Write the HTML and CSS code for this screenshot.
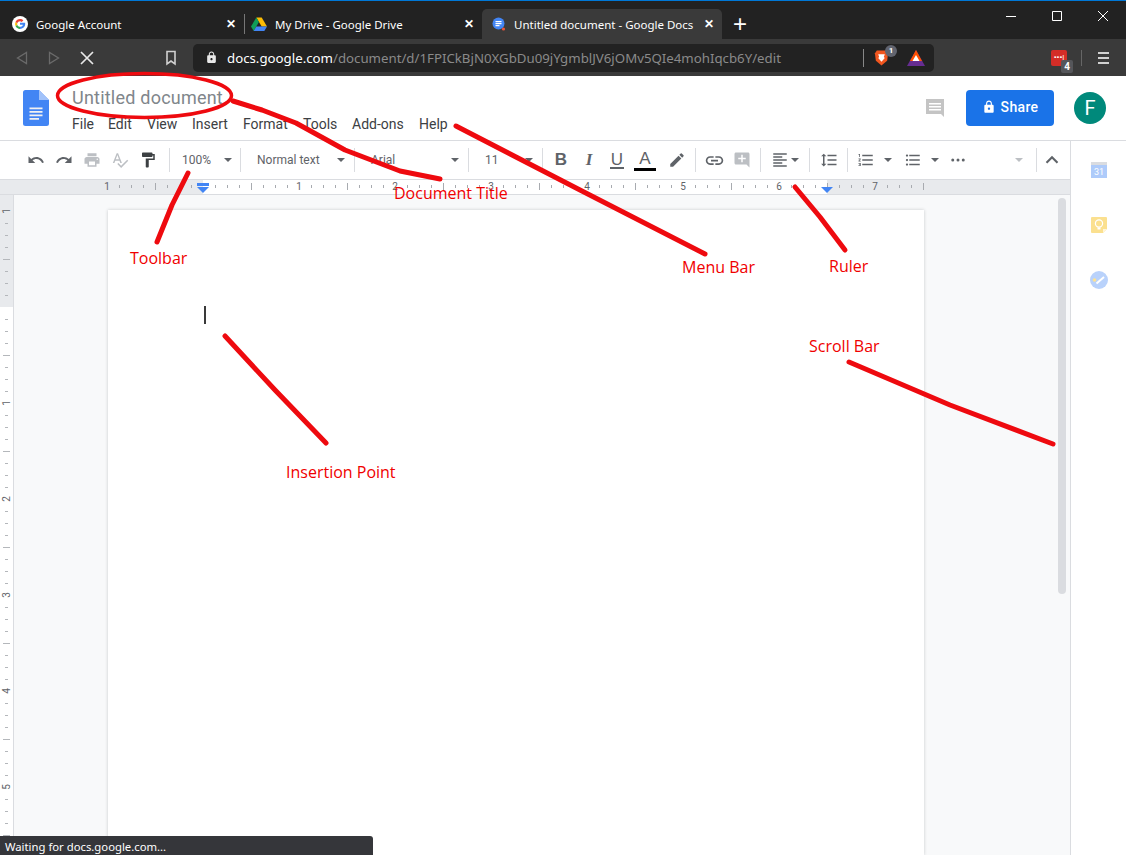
FILE: index.html

```html
<!DOCTYPE html>
<html lang="en">
<head>
    <meta charset="UTF-8">
    <title>Untitled document - Google Docs</title>
    <link rel="stylesheet" href="styles.css">
</head>
<body>

<div class="tabstrip">
    <div class="tab tab-first">
        <svg class="favicon" viewBox="0 0 16 16">
            <circle cx="8" cy="8" r="8" fill="#fff"/>
            <path d="M13.1 6.7H8v2h2.9c-.3 1.3-1.4 2.1-2.9 2.1V13c2.8 0 5.2-2 5.2-4.9 0-.5 0-1-.1-1.4z" fill="#4285f4"/>
            <path d="M8 13c-2 0-3.7-1.2-4.5-2.9l1.8-1.400C5.7 10 6.700 10.800 8 10.800z" fill="#34a853"/>
            <path d="M3.5 10.100a5.200 5.200 0 0 1 0-4.200l1.800 1.400a3 3 0 0 0 0 1.400z" fill="#fbbc05"/>
            <path d="M3.5 5.900C4.300 4.200 6 3 8 3c1.300 0 2.500.5 3.400 1.300L9.800 5.900C9.300 5.500 8.700 5.200 8 5.200c-1.300 0-2.300.8-2.700 2.100z" fill="#ea4335"/>
        </svg>
        <span class="tab-title">Google Account</span>
        <span class="tab-close">✕</span>
    </div>
    <div class="tab-divider"></div>
    <div class="tab">
        <svg class="favicon" viewBox="0 0 16 16">
            <path d="M5.3 1.500h5.400L16 10.500h-5.300z" fill="#fbbc04"/>
            <path d="M5.3 1.500L0 10.500l2.700 4.500 5.200-9z" fill="#0f9d58"/>
            <path d="M2.700 15h10.600l2.700-4.500H5.300z" fill="#4285f4"/>
        </svg>
        <span class="tab-title">My Drive - Google Drive</span>
        <span class="tab-close">✕</span>
    </div>
    <div class="tab tab-active">
        <svg class="favicon favicon-docs" viewBox="0 0 16 16">
            <circle cx="7.5" cy="7.5" r="6" fill="#4285f4"/>
            <path d="M4.500 5h6v1.200h-6zM4.500 7h6v1.200h-6zM4.500 9h4v1.200h-4z" fill="#fff"/>
            <circle cx="12.5" cy="13" r="1.6" fill="#e8553a"/>
        </svg>
        <span class="tab-title">Untitled document - Google Docs</span>
        <span class="tab-close">✕</span>
    </div>
    <div class="new-tab">+</div>
    <div class="window-controls">
        <svg viewBox="0 0 46 30"><path d="M18 15.5h10" stroke="#fff" fill="none"/></svg>
        <svg viewBox="0 0 46 30"><path d="M18.500 10.500h9v9h-9z" stroke="#fff" fill="none"/></svg>
        <svg viewBox="0 0 46 30"><path d="M18 10l10 10M28 10L18 20" stroke="#fff" fill="none"/></svg>
    </div>
</div>

<div class="navbar">
    <svg class="nav-icon nav-back" viewBox="0 0 12 14"><path d="M10.500 1.500v11L1.500 7z" fill="none" stroke="#6a6a6a" stroke-width="1.3"/></svg>
    <svg class="nav-icon nav-forward" viewBox="0 0 12 14"><path d="M1.500 1.500v11l9-5.500z" fill="none" stroke="#6a6a6a" stroke-width="1.3"/></svg>
    <svg class="nav-stop" viewBox="0 0 14 14"><path d="M1 1l12 12M13 1L1 13" stroke="#e8e8e8" stroke-width="1.7" fill="none"/></svg>
    <svg class="nav-bookmark" viewBox="0 0 12 16"><path d="M2 1.500h8v12.500l-4-3-4 3z" stroke="#d0d0d0" stroke-width="1.6" fill="none"/></svg>
    <div class="addressbar">
        <svg class="addr-lock" viewBox="0 0 24 24"><path fill="#e8e8e8" d="M18 8h-1V6c0-2.760-2.240-5-5-5S7 3.240 7 6v2H6c-1.100 0-2 .9-2 2v10c0 1.100.9 2 2 2h12c1.100 0 2-.9 2-2V10c0-1.100-.9-2-2-2zm-6 9c-1.100 0-2-.9-2-2s.9-2 2-2 2 .9 2 2-.9 2-2 2zm3.100-9H8.900V6c0-1.710 1.390-3.100 3.100-3.100 1.710 0 3.100 1.390 3.100 3.100v2z"/></svg>
        <span class="url"><span class="url-host">docs.google.com</span>/document/d/1FPICkBjN0XGbDu09jYgmblJV6jOMv5QIe4mohIqcb6Y/edit</span>
        <div class="addr-divider"></div>
        <div class="brave">
            <svg viewBox="0 0 16 18"><path d="M3 1h10l2 3-1 8-6 5-6-5-1-8z" fill="#f1561f"/><path d="M4.500 5h7l-1 3 1 1-3.500 4-3.500-4 1-1z" fill="#fff"/></svg>
            <span class="brave-count">1</span>
        </div>
        <svg class="bat" viewBox="0 0 18 16"><path d="M9 0l9 16H0z" fill="#662d91"/><path d="M9 0l6 11H3z" fill="#ff5000"/><path d="M9 5l3.500 6h-7z" fill="#fff"/></svg>
    </div>
    <div class="ext-lastpass">
        <span class="lp-dots">•••<i>|</i></span>
        <span class="lp-count">4</span>
    </div>
    <div class="nav-divider"></div>
    <div class="nav-menu"><span></span><span></span><span></span></div>
</div>

<header class="docs-header">
    <svg class="docs-logo" viewBox="0 0 26 36">
        <path d="M16 0H2.500A2.500 2.500 0 0 0 0 2.500v31A2.500 2.500 0 0 0 2.500 36h21a2.500 2.500 0 0 0 2.500-2.500V10z" fill="#4285f4"/>
        <path d="M16 0l10 10H16z" fill="#a1c2fa"/>
        <path d="M6.500 17.500h13v1.700h-13zM6.500 21h13v1.700h-13zM6.500 24.500h13v1.700h-13zM6.500 28h9.500v1.700H6.500z" fill="#f1f1f1"/>
    </svg>
    <div class="docs-titles">
        <div class="doc-title">Untitled document</div>
        <nav class="menubar">
            <span class="m-file">File</span>
            <span class="m-edit">Edit</span>
            <span class="m-view">View</span>
            <span class="m-insert">Insert</span>
            <span class="m-format">Format</span>
            <span class="m-tools">Tools</span>
            <span class="m-addons">Add-ons</span>
            <span>Help</span>
        </nav>
    </div>
    <svg class="comment-icon" viewBox="0 0 20 20"><path fill="#c4c4c4" d="M1 1h18v18l-3-3H1z"/><path fill="#fff" d="M4 5h12v1.500H4zM4 8h12v1.500H4zM4 11h12v1.500H4z"/></svg>
    <button class="share-btn">
        <svg viewBox="0 0 24 24"><path fill="#fff" d="M18 8h-1V6c0-2.760-2.240-5-5-5S7 3.240 7 6v2H6c-1.100 0-2 .9-2 2v10c0 1.100.9 2 2 2h12c1.100 0 2-.9 2-2V10c0-1.100-.9-2-2-2zm-6 9c-1.100 0-2-.9-2-2s.9-2 2-2 2 .9 2 2-.9 2-2 2zm3.100-9H8.900V6c0-1.710 1.390-3.100 3.100-3.100 1.710 0 3.100 1.390 3.100 3.100v2z"/></svg>
        <span>Share</span>
    </button>
    <div class="avatar">F</div>
</header>

<div class="workspace">
    <div class="doc-column">
        <div class="toolbar">
            <div class="tb-btn"><svg viewBox="0 0 24 24"><path d="M12.500 8c-2.650 0-5.050.99-6.900 2.600L2 7v9h9l-3.620-3.620c1.390-1.160 3.160-1.880 5.120-1.880 3.540 0 6.550 2.310 7.600 5.500l2.370-.78C21.080 11.030 17.150 8 12.500 8z"/></svg></div>
            <div class="tb-btn"><svg viewBox="0 0 24 24"><path d="M18.400 10.600C16.550 8.990 14.150 8 11.500 8c-4.650 0-8.580 3.030-9.960 7.220L3.900 16c1.050-3.190 4.050-5.500 7.600-5.500 1.950 0 3.730.72 5.120 1.880L13 16h9V7l-3.600 3.600z"/></svg></div>
            <div class="tb-btn tb-off"><svg viewBox="0 0 24 24"><path d="M19 8H5c-1.660 0-3 1.340-3 3v6h4v4h12v-4h4v-6c0-1.660-1.340-3-3-3zm-3 11H8v-5h8v5zm3-7c-.55 0-1-.45-1-1s.45-1 1-1 1 .45 1 1-.45 1-1 1zm-1-9H6v4h12V3z"/></svg></div>
            <div class="tb-btn tb-off"><svg viewBox="0 0 24 24"><path d="M12.450 16h2.090L9.430 3H7.570L2.460 16h2.090l1.120-3h5.640l1.140 3zm-6.020-5L8.500 5.480 10.570 11H6.430zm15.160.59l-8.090 8.090L9.830 16l-1.410 1.410 5.090 5.090L23 13l-1.410-1.410z"/></svg></div>
            <div class="tb-btn"><svg class="tb-paint" viewBox="0 0 24 24"><path d="M18 4V3c0-.55-.45-1-1-1H5c-.55 0-1 .45-1 1v4c0 .55.45 1 1 1h12c.55 0 1-.45 1-1V6h1v4H9v11c0 .55.45 1 1 1h2c.55 0 1-.45 1-1v-9h8V4h-3z"/></svg></div>
            <div class="tb-sep tb-sep-first"></div>

            <div class="tb-select tb-zoom"><span>100%</span><i class="caret"></i></div>
            <div class="tb-sep tb-sep-flush"></div>
            <div class="tb-select tb-wide"><span>Normal text</span><i class="caret"></i></div>
            <div class="tb-sep tb-sep-flush"></div>
            <div class="tb-select tb-wide"><span>Arial</span><i class="caret"></i></div>
            <div class="tb-sep tb-sep-flush"></div>
            <div class="tb-select tb-size"><span>11</span><i class="caret"></i></div>
            <div class="tb-sep tb-sep-flush"></div>

            <div class="tb-btn tb-text tb-lead"><b>B</b></div>
            <div class="tb-btn tb-text"><b class="tb-italic">I</b></div>
            <div class="tb-btn tb-text"><span class="tb-under">U</span></div>
            <div class="tb-btn tb-text tb-color"><span>A</span><i></i></div>
            <div class="tb-btn tb-lead"><svg viewBox="0 0 24 24"><path d="M3 17.250V21h3.750L17.810 9.940l-3.750-3.750L3 17.250zM20.710 7.040c.39-.39.39-1.020 0-1.410l-2.340-2.340a.996.996 0 0 0-1.410 0l-1.830 1.830 3.750 3.750 1.830-1.830z"/></svg></div>
            <div class="tb-sep"></div>
            <div class="tb-btn"><svg class="tb-big" viewBox="0 0 24 24"><path d="M3.900 12c0-1.710 1.390-3.100 3.100-3.100h4V7H7c-2.760 0-5 2.240-5 5s2.240 5 5 5h4v-1.900H7c-1.710 0-3.100-1.390-3.100-3.100zM8 13h8v-2H8v2zm9-6h-4v1.900h4c1.710 0 3.100 1.390 3.100 3.100s-1.390 3.100-3.100 3.100h-4V17h4c2.760 0 5-2.240 5-5s-2.240-5-5-5z"/></svg></div>
            <div class="tb-btn tb-off"><svg viewBox="0 0 24 24"><path d="M21.990 4c0-1.100-.89-2-1.990-2H4c-1.100 0-2 .9-2 2v12c0 1.100.9 2 2 2h14l4 4-.01-18zM17 11h-4v4h-2v-4H7V9h4V5h2v4h4v2z"/></svg></div>
            <div class="tb-sep"></div>
            <div class="tb-btn tb-align"><svg viewBox="0 0 24 24"><path d="M15 15H3v2h12v-2zm0-8H3v2h12V7zM3 13h18v-2H3v2zm0 8h18v-2H3v2zM3 3v2h18V3H3z"/></svg><i class="caret"></i></div>
            <div class="tb-sep"></div>
            <div class="tb-btn tb-spacing"><svg viewBox="0 0 24 24"><path d="M6 7h2.500L5 3.500 1.500 7H4v10H1.500L5 20.500 8.500 17H6V7zm4-2v2h12V5H10zm0 14h12v-2H10v2zm0-6h12v-2H10v2z"/></svg></div>
            <div class="tb-sep"></div>
            <div class="tb-btn tb-list"><svg viewBox="0 0 24 24"><path d="M2 17h2v.5H3v1h1v.5H2v1h3v-4H2v1zm1-9h1V4H2v1h1v3zm-1 3h1.800L2 13.100v.9h3v-1H3.200L5 10.900V10H2v1zm5-6v2h14V5H7zm0 14h14v-2H7v2zm0-6h14v-2H7v2z"/></svg><i class="caret"></i></div>
            <div class="tb-btn tb-list tb-list-b"><svg viewBox="0 0 24 24"><path d="M4 10.500c-.83 0-1.500.67-1.500 1.500s.67 1.500 1.500 1.500 1.500-.67 1.500-1.500-.67-1.500-1.500-1.500zm0-6c-.83 0-1.500.67-1.500 1.500S3.170 7.500 4 7.500 5.500 6.830 5.500 6 4.830 4.500 4 4.500zm0 12c-.83 0-1.500.68-1.500 1.500s.68 1.500 1.500 1.500 1.500-.68 1.500-1.500-.67-1.500-1.500-1.500zM7 19h14v-2H7v2zm0-6h14v-2H7v2zm0-8v2h14V5H7z"/></svg><i class="caret"></i></div>
            <div class="tb-btn"><svg viewBox="0 0 24 24"><circle cx="5" cy="12" r="2"/><circle cx="12" cy="12" r="2"/><circle cx="19" cy="12" r="2"/></svg></div>
            <div class="tb-spacer"></div>
            <i class="caret caret-off"></i>
            <div class="tb-sep tb-sep-end"></div>
            <div class="tb-btn tb-chevron"><svg viewBox="0 0 24 24"><path d="M12 7l-7.500 7.500 1.800 1.800L12 10.600l5.700 5.700 1.800-1.800z"/></svg></div>
        </div>

        <svg class="ruler-h" width="1070" height="14" viewBox="0 0 1070 14">
            <defs>
                <pattern id="hticks" width="96" height="14" patternUnits="userSpaceOnUse" x="11">
                    <path d="M12.500 5v3M24.500 5v3M36.500 5v3M60.500 5v3M72.500 5v3M84.500 5v3" stroke="#a8abb0"/>
                    <path d="M48.500 3v7" stroke="#a8abb0"/>
                </pattern>
            </defs>
            <rect width="1070" height="14" fill="#e8eaed"/>
            <rect x="203" width="624" height="14" fill="#fff"/>
            <rect x="108" width="816" height="14" fill="url(#hticks)"/>
            <path d="M923.500 3v7" stroke="#a8abb0"/>
            <g class="ruler-num">
                <text x="107" y="10">1</text>
                <text x="299" y="10">1</text>
                <text x="395" y="10">2</text>
                <text x="491" y="10">3</text>
                <text x="587" y="10">4</text>
                <text x="683" y="10">5</text>
                <text x="779" y="10">6</text>
                <text x="875" y="10">7</text>
            </g>
            <path d="M197 3h12v3h-12z" fill="#4285f4"/>
            <path d="M197 7h12l-6 6z" fill="#4285f4"/>
            <path d="M821 7h12l-6 6z" fill="#4285f4"/>
        </svg>

        <div class="canvas">
            <svg class="ruler-v" width="14" height="661" viewBox="0 0 14 661">
                <defs>
                    <pattern id="vticks" width="14" height="96" patternUnits="userSpaceOnUse" y="16">
                        <path d="M5 12.500h3M5 24.500h3M5 36.500h3M5 60.500h3M5 72.500h3M5 84.500h3" stroke="#b4b7bb"/>
                        <path d="M3 48.500h7" stroke="#b4b7bb"/>
                    </pattern>
                </defs>
                <rect width="14" height="661" fill="#fff"/>
                <rect width="13" height="112" fill="#e8eaed"/>
                <rect y="16" width="13" height="645" fill="url(#vticks)"/>
                <rect x="13" width="1" height="661" fill="#dadce0"/>
                <g class="ruler-num">
                    <text transform="translate(10 16) rotate(-90)">1</text>
                    <text transform="translate(10 208) rotate(-90)">1</text>
                    <text transform="translate(10 304) rotate(-90)">2</text>
                    <text transform="translate(10 400) rotate(-90)">3</text>
                    <text transform="translate(10 496) rotate(-90)">4</text>
                    <text transform="translate(10 592) rotate(-90)">5</text>
                </g>
            </svg>
            <div class="page"><div class="caret-line"></div></div>
            <div class="scrollbar"></div>
        </div>
    </div>

    <aside class="sidepanel">
        <svg viewBox="0 0 18 18"><path d="M1 1h16v16H1z" fill="#aecbfa"/><path d="M1 1h16v3H1z" fill="#dadce0"/><text x="9" y="14" class="cal-day">31</text></svg>
        <svg viewBox="0 0 18 18"><path d="M2 1h14a1 1 0 0 1 1 1v11l-4 4H2a1 1 0 0 1-1-1V2a1 1 0 0 1 1-1z" fill="#fbe08f"/><path d="M13 17v-4h4z" fill="#fff6d8"/><circle cx="9" cy="7.5" r="3.6" fill="none" stroke="#fff" stroke-width="1.2"/><path d="M7.500 11.500h3v2h-3z" fill="#fff"/></svg>
        <svg viewBox="0 0 18 18"><circle cx="9" cy="9" r="9" fill="#b9d2fb"/><path d="M6.500 12.500L14 6" stroke="#fff" stroke-width="2" fill="none"/><circle cx="4.500" cy="9" r="1.800" fill="#fde293"/></svg>
    </aside>
</div>

<div class="status-bubble">Waiting for docs.google.com...</div>

<!-- red marks that were drawn over the screenshot -->
<svg class="marks" width="1126" height="855" viewBox="0 0 1126 855">
    <ellipse class="mark-ring" cx="144.5" cy="95.5" rx="87" ry="22"/>
    <path d="M233 101L262 110L296 123L345 150L400 171L440 179"/>
    <path d="M456 126L580 190L705 254"/>
    <path d="M795 187L820 217L845 250"/>
    <path d="M188 173L172 205L157 242"/>
    <path d="M225 336L275 390L326 443"/>
    <path d="M849 362L950 405L1053 444"/>
</svg>
<span class="mark-label l-title">Document Title</span>
<span class="mark-label l-toolbar">Toolbar</span>
<span class="mark-label l-menu">Menu Bar</span>
<span class="mark-label l-ruler">Ruler</span>
<span class="mark-label l-scroll">Scroll Bar</span>
<span class="mark-label l-insert">Insertion Point</span>

</body>
</html>
```

FILE: styles.css

```css
* {
    box-sizing: border-box;
}
html, body {
    margin: 0;
    height: 855px;
    overflow: hidden;
}
body {
    position: relative;
    display: flex;
    flex-direction: column;
    background-color: #fff;
    font-family: Roboto, "Liberation Sans", sans-serif;
}
svg {
    display: block;
}
i {
    font-style: normal;
}

/* browser window */
.tabstrip {
    display: flex;
    align-items: flex-end;
    height: 39px;
    padding-top: 8px;
    border-top: 1px solid #0078d7;
    background-color: #222222;
    color: #fff;
    font-family: "Noto Sans", sans-serif;
    font-size: 11.5px;
    position: relative;
}
.tab {
    display: flex;
    align-items: center;
    width: 237px;
    height: 30px;
    padding-left: 6px;
    padding-right: 6px;
}
.tab-first {
    width: 244px;
    padding-left: 12px;
    padding-right: 6px;
}
.tab-active {
    width: 240px;
    padding-left: 9px;
    background-color: #3a3a3a;
    border-radius: 5px 5px 0 0;
}
.tab-divider {
    width: 1px;
    height: 20px;
    margin-bottom: 5px;
    background-color: #777;
}
.favicon {
    flex: none;
    width: 16px;
    height: 16px;
    margin-right: 8px;
}
.favicon-docs {
    margin-right: 7px;
}
.tab-title {
    flex: 1;
    white-space: nowrap;
    overflow: hidden;
}
.tab-close {
    flex: none;
    margin-right: 1px;
    font-size: 12px;
    font-weight: bold;
    line-height: 1;
    width: 12px;
    text-align: center;
}
.new-tab {
    width: 36px;
    height: 30px;
    text-align: center;
    font-size: 24px;
    line-height: 30px;
    font-family: "Liberation Sans", sans-serif;
}
.window-controls {
    display: flex;
    position: absolute;
    right: 0;
    top: 0;
}
.window-controls svg {
    width: 46px;
    height: 30px;
}

.navbar {
    display: flex;
    align-items: center;
    height: 37px;
    padding-bottom: 0;
    background-color: #3a3a3a;
}
.nav-icon {
    width: 12px;
    height: 14px;
}
.nav-back {
    margin-left: 16px;
}
.nav-forward {
    margin-left: 20px;
}
.nav-stop {
    width: 14px;
    height: 14px;
    margin-left: 20px;
}
.nav-bookmark {
    width: 12px;
    height: 16px;
    margin-left: 71px;
}
.addressbar {
    display: flex;
    align-items: center;
    width: 741px;
    height: 28px;
    margin-left: 16px;
    padding-left: 12px;
    background-color: #222222;
    border-radius: 5px;
}
.addr-lock {
    width: 13px;
    height: 13px;
}
.url {
    margin-left: 9px;
    width: 636px;
    font-family: "Noto Sans", sans-serif;
    font-size: 13.25px;
    color: #8a8a8a;
    white-space: nowrap;
}
.url-host {
    color: #fff;
}
.addr-divider {
    width: 1px;
    height: 18px;
    background-color: #888;
}
.brave {
    position: relative;
    margin-left: 10px;
}
.brave svg {
    width: 15px;
    height: 18px;
}
.brave-count {
    position: absolute;
    left: 11px;
    top: -4px;
    width: 12px;
    height: 12px;
    border-radius: 50%;
    background-color: #61646f;
    color: #fff;
    font-size: 8px;
    line-height: 12px;
    text-align: center;
    font-weight: bold;
}
.bat {
    width: 18px;
    height: 16px;
    margin-left: 18px;
}
.ext-lastpass {
    position: relative;
    width: 16px;
    height: 16px;
    margin-left: 117px;
    background-color: #d32d27;
    border-radius: 2px;
}
.lp-dots {
    display: block;
    color: #fff;
    font-size: 8px;
    line-height: 16px;
    text-align: center;
    font-weight: bold;
    white-space: nowrap;
}
.lp-count {
    position: absolute;
    left: 10px;
    top: 10px;
    width: 12px;
    height: 13px;
    border-radius: 2px;
    background-color: #55565a;
    color: #fff;
    font-size: 10px;
    line-height: 13px;
    text-align: center;
    font-weight: bold;
}
.nav-divider {
    width: 1px;
    height: 16px;
    margin-left: 14px;
    background-color: #666;
}
.nav-menu {
    display: flex;
    flex-direction: column;
    gap: 3px;
    margin-left: 16px;
}
.nav-menu span {
    display: block;
    width: 11px;
    height: 2px;
    background-color: #d0d0d0;
}

/* docs header */
.docs-header {
    display: flex;
    align-items: flex-start;
    height: 65px;
    padding-top: 14px;
    border-bottom: 1px solid #dadce0;
    background-color: #fff;
}
.docs-logo {
    width: 26px;
    height: 36px;
    margin-left: 23px;
}
.docs-titles {
    margin-left: 23px;
    flex: 1;
}
.doc-title {
    font-size: 18px;
    line-height: 20px;
    margin-top: -2px;
    color: #80868b;
    letter-spacing: 0.22px;
}
.menubar {
    display: flex;
    margin-top: 6px;
    font-size: 14px;
    line-height: 20px;
    color: #3c4043;
}
.menubar span {
    flex: none;
}
.m-file { width: 36px; }
.m-edit { width: 39px; }
.m-view { width: 45px; }
.m-insert { width: 51px; }
.m-format { width: 60px; }
.m-tools { width: 49px; }
.m-addons { width: 67px; }
.comment-icon {
    width: 20px;
    height: 20px;
    margin-top: 8px;
    margin-right: 21px;
}
.share-btn {
    display: flex;
    align-items: center;
    justify-content: center;
    gap: 5px;
    width: 88px;
    height: 36px;
    padding: 0 0 2px;
    border: none;
    border-radius: 4px;
    background-color: #1a73e8;
    color: #fff;
    font-family: Roboto, sans-serif;
    font-size: 14px;
    font-weight: 500;
    letter-spacing: 0.35px;
}
.share-btn svg {
    width: 14px;
    height: 14px;
}
.avatar {
    width: 32px;
    height: 32px;
    margin-left: 20px;
    margin-right: 20px;
    margin-top: 2px;
    border-radius: 50%;
    background-color: #00897b;
    color: #fff;
    font-size: 20px;
    line-height: 32px;
    text-align: center;
}

/* work area */
.workspace {
    display: flex;
    flex: 1;
    min-height: 0;
}
.doc-column {
    display: flex;
    flex-direction: column;
    width: 1070px;
}
.toolbar {
    display: flex;
    align-items: center;
    height: 39px;
    padding-left: 22px;
    padding-right: 4px;
    border-bottom: 1px solid #dadce0;
    color: #5f6368;
}
.tb-btn {
    display: flex;
    align-items: center;
    justify-content: center;
    flex: none;
    width: 28px;
    height: 28px;
}
.tb-btn svg {
    flex: none;
    width: 18px;
    height: 18px;
    fill: #5f6368;
}
.tb-btn .tb-paint {
    fill: #3c4043;
}
.tb-btn .tb-big {
    width: 21px;
    height: 21px;
}
.tb-off svg {
    fill: #bcbfc3;
}
.tb-sep {
    flex: none;
    width: 1px;
    height: 24px;
    margin: 0 4px;
    background-color: #dadce0;
}
.tb-sep-first {
    margin: 0 0 0 7px;
}
.tb-sep-flush {
    margin: 0;
}
.tb-sep-end {
    margin: 0 1px 0 13px;
}
.tb-lead {
    margin-left: 4px;
}
.tb-spacing {
    margin-left: 1px;
}
.tb-select {
    display: flex;
    align-items: center;
    justify-content: space-between;
    flex: none;
    height: 28px;
    padding-right: 9px;
    padding-left: 16px;
    font-size: 12px;
}
.tb-zoom {
    width: 70px;
    padding-left: 12px;
    padding-right: 8px;
}
.tb-wide {
    width: 113px;
}
.tb-size {
    width: 73px;
}
.caret {
    display: block;
    flex: none;
    width: 0;
    height: 0;
    border-left: 4px solid transparent;
    border-right: 4px solid transparent;
    border-top: 4px solid #5f6368;
}
.caret-off {
    border-top-color: #bcbfc3;
}
.tb-text {
    font-size: 17px;
    font-family: "Liberation Sans", sans-serif;
}
.tb-italic {
    font-family: "Liberation Serif", serif;
    font-style: italic;
}
.tb-under {
    border-bottom: 2px solid #5f6368;
    line-height: 15px;
    padding: 0 1px;
}
.tb-color {
    flex-direction: column;
}
.tb-color span {
    line-height: 17px;
    margin-top: 1px;
}
.tb-color i {
    display: block;
    width: 22px;
    height: 3px;
    background-color: #000;
    margin-top: 1px;
}
.tb-align {
    width: 40px;
    gap: 2px;
    justify-content: flex-start;
    padding-left: 6px;
}
.tb-list {
    width: 44px;
    justify-content: flex-start;
    padding-left: 5px;
    gap: 9px;
}
.tb-list-b {
    margin-left: 3px;
    margin-right: 1px;
}
.tb-spacer {
    flex: 1;
}
.tb-chevron svg {
    width: 20px;
    height: 20px;
}

.ruler-h {
    flex: none;
}
.ruler-num {
    font-family: Roboto, sans-serif;
    font-size: 10px;
    fill: #5f6368;
    text-anchor: middle;
}
.canvas {
    display: flex;
    flex: 1;
    min-height: 0;
    background-color: #f8f9fa;
    border-top: 1px solid #dadce0;
}
.ruler-v {
    flex: none;
}
.page {
    flex: none;
    width: 816px;
    margin-left: 94px;
    margin-top: 15px;
    padding: 96px;
    background-color: #fff;
    box-shadow: 0 0 3px rgba(60, 64, 67, 0.25);
}
.caret-line {
    width: 2px;
    height: 18px;
    background-color: #3a3a3a;
}
.scrollbar {
    flex: none;
    width: 8px;
    height: 396px;
    margin-top: 3px;
    margin-left: 134px;
    border-radius: 4px;
    background-color: #dadce0;
}
.sidepanel {
    display: flex;
    flex-direction: column;
    align-items: center;
    gap: 37px;
    width: 56px;
    padding-top: 20px;
    border-left: 1px solid #dadce0;
}
.sidepanel svg {
    width: 18px;
    height: 18px;
}
.cal-day {
    font-family: Roboto, sans-serif;
    font-size: 9px;
    fill: #fff;
    text-anchor: middle;
}

.status-bubble {
    position: absolute;
    left: 0;
    bottom: 0;
    width: 373px;
    height: 19px;
    padding-left: 5px;
    border-radius: 0 3px 0 0;
    background-color: #35363a;
    color: #fff;
    font-family: "Noto Sans", sans-serif;
    font-size: 11.3px;
    line-height: 21px;
}

/* red annotations on top of the screenshot */
.marks {
    position: absolute;
    left: 0;
    top: 0;
    fill: none;
    stroke: #ee0a0f;
    stroke-width: 5;
    stroke-linecap: round;
    stroke-linejoin: round;
}
.marks .mark-ring {
    stroke-width: 3.5;
}
.mark-label {
    position: absolute;
    color: #f00000;
    font-family: "Open Sans", sans-serif;
    font-size: 16px;
    line-height: 20px;
    white-space: nowrap;
}
.l-title { left: 394px; top: 183px; }
.l-toolbar { left: 130px; top: 248px; }
.l-menu { left: 682px; top: 257px; }
.l-ruler { left: 829px; top: 256px; }
.l-scroll { left: 809px; top: 336px; }
.l-insert { left: 286px; top: 462px; }
```
